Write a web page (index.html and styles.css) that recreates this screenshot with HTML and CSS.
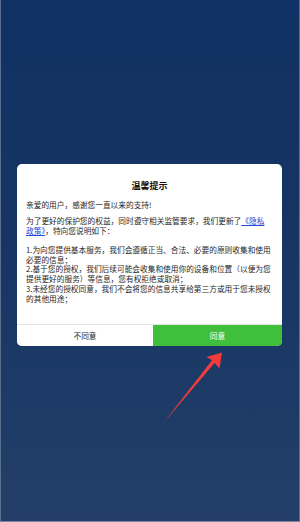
FILE: index.html
```html
<!DOCTYPE html>
<html lang="zh-CN">
<head>
<meta charset="utf-8">
<title>温馨提示</title>
<link rel="stylesheet" href="styles.css">
</head>
<body>
<div class="screen">
  <div class="dialog">
    <h1 class="title">温馨提示</h1>
    <div class="content">
      <p class="greet">亲爱的用户，感谢您一直以来的支持!</p>
      <p class="intro">为了更好的保护您的权益，同时遵守相关监管要求，我们更新了<a class="link" href="#">《隐私<br>政策》</a>，特向您说明如下：</p>
      <p class="list">1.为向您提供基本服务，我们会遵循正当、合法、必要的原则收集和使用必要的信息；<br>2.基于您的授权，我们后续可能会收集和使用你的设备和位置（以便为您提供更好的服务）等信息，您有权拒绝或取消；<br>3.未经您的授权同意，我们不会将您的信息共享给第三方或用于您未授权的其他用途；</p>
    </div>
    <div class="actions">
      <button class="btn btn-decline">不同意</button>
      <button class="btn btn-accept">同意</button>
    </div>
  </div>
  <svg class="arrow" width="300" height="522" viewBox="0 0 300 522">
    <polygon points="221,352.5 205.5,357 211,360.3 162,423.5 213.6,363 218.5,368.5" fill="#f23b3b"/>
  </svg>
</div>
</body>
</html>
```

FILE: styles.css
```css
* { box-sizing: border-box; }
html, body {
  margin: 0;
  padding: 0;
}
body {
  width: 300px;
  height: 522px;
  overflow: hidden;
  font-family: "Noto Sans CJK SC", "Noto Sans", sans-serif;
}
.screen {
  position: relative;
  width: 300px;
  height: 522px;
  background: linear-gradient(180deg, #0f3163 0%, #163563 45%, #233f69 100%);
  border-left: 1px solid #5a6e8e;
  border-right: 1px solid #5a6e8e;
  border-bottom: 1px solid #7a889e;
  padding: 164px 17px 0 16px;
}
.dialog {
  width: 265px;
  background: #ffffff;
  border-radius: 5px;
  overflow: hidden;
  display: flex;
  flex-direction: column;
}
.title {
  margin: 0;
  padding-top: 16px;
  font-size: 9px;
  line-height: 12px;
  font-weight: 700;
  color: #111111;
  text-align: center;
}
.content {
  padding: 8px 9px 20.6px 9px;
  font-size: 7.7px;
  line-height: 9.7px;
  color: #1f1f1f;
}
.content p {
  margin: 0;
}
.greet { margin-bottom: 6.3px !important; }
.intro { margin-bottom: 9.6px !important; }
.link {
  color: #2448d6;
  text-decoration: underline;
}
.actions {
  display: grid;
  grid-template-columns: 136px 1fr;
  border-top: 1px solid #e4e4e4;
  height: 22px;
}
.btn {
  border: 0;
  margin: 0;
  padding: 0;
  font-family: inherit;
  font-size: 7.7px;
  line-height: 21px;
  height: 21px;
}
.btn-decline {
  background: #ffffff;
  color: #1f1f1f;
}
.btn-accept {
  background: #3fbf3b;
  color: #ffffff;
}
.arrow {
  position: absolute;
  left: 0;
  top: 0;
  pointer-events: none;
}
```
